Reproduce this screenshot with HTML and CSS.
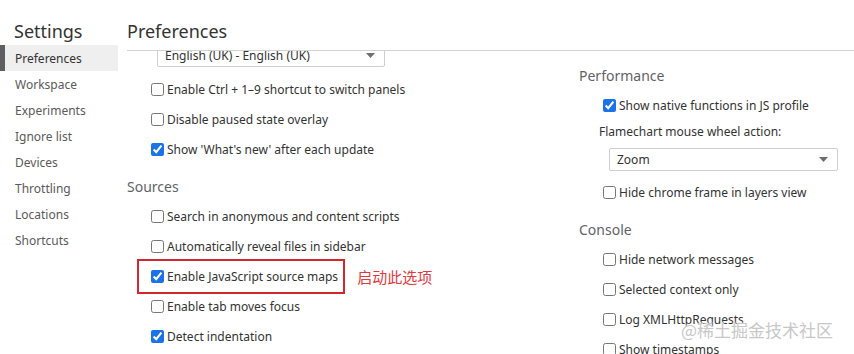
FILE: index.html
```html
<!DOCTYPE html>
<html lang="en">
<head>
    <meta charset="UTF-8">
    <title>Settings</title>
    <link rel="stylesheet" href="styles.css">
</head>
<body>
    <div class="settings">
        <aside class="sidebar">
            <h1 class="title">Settings</h1>
            <ul class="nav">
                <li class="nav-item active">Preferences</li>
                <li class="nav-item">Workspace</li>
                <li class="nav-item">Experiments</li>
                <li class="nav-item">Ignore list</li>
                <li class="nav-item">Devices</li>
                <li class="nav-item">Throttling</li>
                <li class="nav-item">Locations</li>
                <li class="nav-item">Shortcuts</li>
            </ul>
        </aside>

        <main class="main">
            <h2 class="title main-title">Preferences</h2>
            <div class="panel">
                <div class="column column-left">
                    <div class="select select-language">
                        <span>English (UK) - English (UK)</span>
                        <svg class="arrow" width="9" height="5" viewBox="0 0 9 5"><path d="M0 0h9L4.5 5z" fill="#6e6e6e"/></svg>
                    </div>
                    <label class="option"><input type="checkbox">Enable Ctrl + 1–9 shortcut to switch panels</label>
                    <label class="option"><input type="checkbox">Disable paused state overlay</label>
                    <label class="option"><input type="checkbox" checked>Show 'What's new' after each update</label>

                    <h3 class="section-title">Sources</h3>
                    <label class="option"><input type="checkbox">Search in anonymous and content scripts</label>
                    <label class="option"><input type="checkbox">Automatically reveal files in sidebar</label>
                    <div class="option">
                        <label class="highlight"><input type="checkbox" checked>Enable JavaScript source maps</label>
                        <span class="note">启动此选项</span>
                    </div>
                    <label class="option"><input type="checkbox">Enable tab moves focus</label>
                    <label class="option"><input type="checkbox" checked>Detect indentation</label>
                </div>

                <div class="column column-right">
                    <h3 class="section-title first">Performance</h3>
                    <label class="option"><input type="checkbox" checked>Show native functions in JS profile</label>
                    <div class="field-label">Flamechart mouse wheel action:</div>
                    <div class="select select-zoom">
                        <span>Zoom</span>
                        <svg class="arrow" width="9" height="5" viewBox="0 0 9 5"><path d="M0 0h9L4.5 5z" fill="#6e6e6e"/></svg>
                    </div>
                    <label class="option"><input type="checkbox">Hide chrome frame in layers view</label>

                    <h3 class="section-title">Console</h3>
                    <label class="option"><input type="checkbox">Hide network messages</label>
                    <label class="option"><input type="checkbox">Selected context only</label>
                    <label class="option"><input type="checkbox">Log XMLHttpRequests</label>
                    <label class="option"><input type="checkbox">Show timestamps</label>
                </div>
            </div>
        </main>
    </div>

    <div class="watermark">@稀土掘金技术社区</div>
</body>
</html>
```

FILE: styles.css
```css
body {
    margin: 0;
    font-family: 'Noto Sans', 'Noto Sans CJK SC', sans-serif;
    font-size: 12px;
    color: #333;
    background-color: #ffffff;
    height: 354px;
    overflow: hidden;
}
.settings {
    display: flex;
    height: 354px;
}

/* left side */
.sidebar {
    width: 118px;
    flex-shrink: 0;
}
.title {
    margin: 0;
    padding: 19px 0 2px 14px;
    font-size: 18px;
    font-weight: normal;
    line-height: 24px;
    color: #333;
}
.nav {
    list-style: none;
    margin: 0;
    padding: 0;
}
.nav-item {
    height: 26px;
    line-height: 27px;
    padding-left: 15px;
    color: #5a5a5a;
}
.nav-item.active {
    background-color: #efefef;
    border-left: 5px solid #5f5f5f;
    padding-left: 10px;
    color: #333;
}

/* main */
.main {
    flex: 1;
    display: flex;
    flex-direction: column;
    padding-left: 9px;
    min-width: 0;
}
.main-title {
    padding-left: 0;
    padding-bottom: 7px;
    border-bottom: 1px solid #d3d3d3;
}
.panel {
    flex: 1;
    display: grid;
    grid-template-columns: 452px 1fr;
    overflow: hidden;
}
.column {
    display: flex;
    flex-direction: column;
    align-items: flex-start;
}

.section-title {
    margin: 12px 0 3px 0;
    height: 22px;
    line-height: 22px;
    font-size: 14px;
    font-weight: normal;
    color: #5f6368;
}
.section-title.first {
    margin-top: 14px;
}

.option {
    display: flex;
    align-items: center;
    height: 30px;
    padding-left: 24px;
    white-space: nowrap;
}
.option input[type="checkbox"],
.highlight input[type="checkbox"] {
    width: 13px;
    height: 13px;
    margin: 0 3px 0 0;
    accent-color: #1a73e8;
}
.highlight {
    display: flex;
    align-items: center;
    height: 31px;
    margin-left: -14px;
    padding: 0 5px 0 12px;
    border: 2px solid #d3262e;
}
.note {
    margin-left: 12px;
    font-size: 15px;
    color: #e0393e;
}

.select {
    display: flex;
    align-items: center;
    justify-content: space-between;
    box-sizing: border-box;
    height: 23px;
    padding: 0 9px 0 7px;
    border: 1px solid #cfcfcf;
    border-radius: 2px;
    background-color: #ffffff;
    color: #333;
}
.select-language {
    width: 228px;
    margin: -7px 0 7px 30px;
}
.select-zoom {
    width: 229px;
    margin: 6px 0 6px 30px;
}
.field-label {
    height: 20px;
    line-height: 20px;
    margin-top: 2px;
    padding-left: 20px;
}

.watermark {
    position: absolute;
    left: 681px;
    top: 317px;
    font-family: 'Noto Sans CJK SC', sans-serif;
    font-size: 17px;
    color: #c8c8c8;
    text-shadow: 0 0 2px #ffffff, 0 0 2px #ffffff;
}
```
